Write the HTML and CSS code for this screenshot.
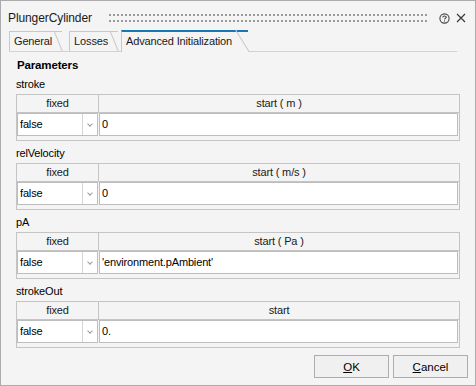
FILE: index.html
```html
<!DOCTYPE html>
<html lang="en">
<head>
    <meta charset="UTF-8">
    <meta name="viewport" content="width=device-width, initial-scale=1.0">
    <title>PlungerCylinder</title>
    <link rel="stylesheet" href="styles.css">
</head>
<body>
    <div class="dialog">
        <div class="titlebar">
            <span class="title">PlungerCylinder</span>
            <div class="grip"></div>
            <svg class="help-icon" width="11" height="11" viewBox="0 0 11 11">
                <circle cx="5.5" cy="5.5" r="4.6" fill="none" stroke="#444" stroke-width="1.1"/>
                <path d="M3.8 4.4 C3.8 2.6 7.2 2.6 7.2 4.3 C7.2 5.4 5.5 5.4 5.5 6.6" fill="none" stroke="#444" stroke-width="1.1"/>
                <rect x="5" y="7.4" width="1.1" height="1.1" fill="#444"/>
            </svg>
            <svg class="close-icon" width="10" height="10" viewBox="0 0 10 10">
                <path d="M1 1 L9 9 M9 1 L1 9" stroke="#333" stroke-width="1.1"/>
            </svg>
        </div>

        <div class="tabs">
            <div class="tab">General</div>
            <div class="tab">Losses</div>
            <div class="tab active">Advanced Initialization</div>
        </div>

        <div class="panel">
            <div class="heading">Parameters</div>

            <div class="param">
                <div class="param-name">stroke</div>
                <div class="grid">
                    <div class="grid-head">
                        <div class="head-fixed">fixed</div>
                        <div class="head-start">start ( m )</div>
                    </div>
                    <div class="grid-body">
                        <div class="combo">
                            <div class="combo-value">false</div>
                            <div class="combo-arrow"><span class="chevron"></span></div>
                        </div>
                        <div class="value">0</div>
                    </div>
                </div>
            </div>

            <div class="param">
                <div class="param-name">relVelocity</div>
                <div class="grid">
                    <div class="grid-head">
                        <div class="head-fixed">fixed</div>
                        <div class="head-start">start ( m/s )</div>
                    </div>
                    <div class="grid-body">
                        <div class="combo">
                            <div class="combo-value">false</div>
                            <div class="combo-arrow"><span class="chevron"></span></div>
                        </div>
                        <div class="value">0</div>
                    </div>
                </div>
            </div>

            <div class="param">
                <div class="param-name">pA</div>
                <div class="grid">
                    <div class="grid-head">
                        <div class="head-fixed">fixed</div>
                        <div class="head-start">start ( Pa )</div>
                    </div>
                    <div class="grid-body">
                        <div class="combo">
                            <div class="combo-value">false</div>
                            <div class="combo-arrow"><span class="chevron"></span></div>
                        </div>
                        <div class="value">'environment.pAmbient'</div>
                    </div>
                </div>
            </div>

            <div class="param">
                <div class="param-name">strokeOut</div>
                <div class="grid">
                    <div class="grid-head">
                        <div class="head-fixed">fixed</div>
                        <div class="head-start">start</div>
                    </div>
                    <div class="grid-body">
                        <div class="combo">
                            <div class="combo-value">false</div>
                            <div class="combo-arrow"><span class="chevron"></span></div>
                        </div>
                        <div class="value">0.</div>
                    </div>
                </div>
            </div>
        </div>

        <div class="footer">
            <button class="btn"><u>O</u>K</button>
            <button class="btn"><u>C</u>ancel</button>
        </div>
    </div>
</body>
</html>
```

FILE: styles.css
```css
body {
    margin: 0;
    font-family: "Liberation Sans", Arial, sans-serif;
    font-size: 11px;
    letter-spacing: -0.15px;
    color: #000;
    background-color: #f4f4f4;
}
.dialog {
    width: 476px;
    height: 386px;
    box-sizing: border-box;
    border: 1px solid #ababab;
    background-color: #f4f4f4;
    display: flex;
    flex-direction: column;
}
.titlebar {
    height: 26px;
    padding: 4px 9px 0 7px;
    display: flex;
    align-items: center;
}
.title {
    font-size: 12px;
    letter-spacing: -0.1px;
    color: #1a1a1a;
}
/* two rows of 2x2 dots */
.grip {
    flex: 1;
    height: 8px;
    margin: 0 11px 0 17px;
    background-color: #999;
    background-image:
        linear-gradient(90deg, transparent 2px, #f4f4f4 2px),
        linear-gradient(transparent 2px, #f4f4f4 2px);
    background-size: 4px 6px;
}
.help-icon {
    margin-right: 6px;
}

/* tab strip */
.tabs {
    height: 20px;
    margin: 0 18px 0 8px;
    display: flex;
    align-items: flex-end;
    border-bottom: 1px solid #d2d2d2;
}
.tab {
    position: relative;
    height: 19px;
    line-height: 19px;
    padding: 0 10px 0 4px;
    margin-right: 7px;
    border-top: 1px solid #c8c8c8;
    border-left: 1px solid #c8c8c8;
    color: #1a1a1a;
}
.tab::after {
    content: "";
    position: absolute;
    top: 0;
    left: calc(100% - 8px);
    width: 1px;
    height: 21px;
    background-color: #c8c8c8;
    transform-origin: top left;
    transform: rotate(-22deg);
}
.tab.active {
    height: 19px;
    margin: 0 0 -1px -4px;
    padding: 0 16px 1px 4px;
    border-top: 2px solid #1878b4;
    background-color: #f4f4f4;
}
.tab.active::after {
    top: -2px;
    left: calc(100% - 13px);
    height: 25px;
    transform: rotate(-32deg);
}

/* parameters panel */
.panel {
    flex: 1;
    padding: 6px 15px 0 15px;
}
.heading {
    font-weight: bold;
    font-size: 11.5px;
    line-height: 14px;
    padding-left: 1px;
}
.param {
    margin-top: 4px;
}
.param-name {
    line-height: 16px;
    margin-bottom: 2px;
}
.grid {
    border: 1px solid #c4c4c4;
}
.grid-head {
    display: flex;
    height: 17px;
    line-height: 17px;
    border-bottom: 1px solid #c4c4c4;
    color: #1a1a1a;
}
.head-fixed {
    width: 81px;
    text-align: center;
    border-right: 1px solid #c4c4c4;
}
.head-start {
    flex: 1;
    text-align: center;
}
.grid-body {
    display: flex;
    gap: 1px;
    padding: 0 1px 4px 0;
}
.combo {
    width: 79px;
    height: 21px;
    display: flex;
    border: 1px solid #bdbdbd;
    background-color: #fff;
}
.combo-value {
    width: 64px;
    line-height: 21px;
    padding-left: 2px;
    box-sizing: border-box;
}
.combo-arrow {
    flex: 1;
    border-left: 1px solid #d4d4d4;
    display: flex;
    justify-content: center;
    align-items: center;
}
.chevron {
    width: 3px;
    height: 3px;
    border-right: 1.5px solid #9a9a9a;
    border-bottom: 1.5px solid #9a9a9a;
    transform: rotate(45deg);
    margin-top: -2px;
}
.value {
    flex: 1;
    height: 21px;
    line-height: 21px;
    padding-left: 2px;
    border: 1px solid #bdbdbd;
    background-color: #fff;
}

/* buttons */
.footer {
    display: flex;
    justify-content: flex-end;
    gap: 4px;
    padding: 0 7px 7px 0;
}
.btn {
    width: 75px;
    height: 23px;
    padding: 0;
    font-family: "Liberation Sans", Arial, sans-serif;
    font-size: 11.5px;
    color: #000;
    background-color: #f0f0f0;
    border: 1px solid #adadad;
    border-radius: 0;
}
```
